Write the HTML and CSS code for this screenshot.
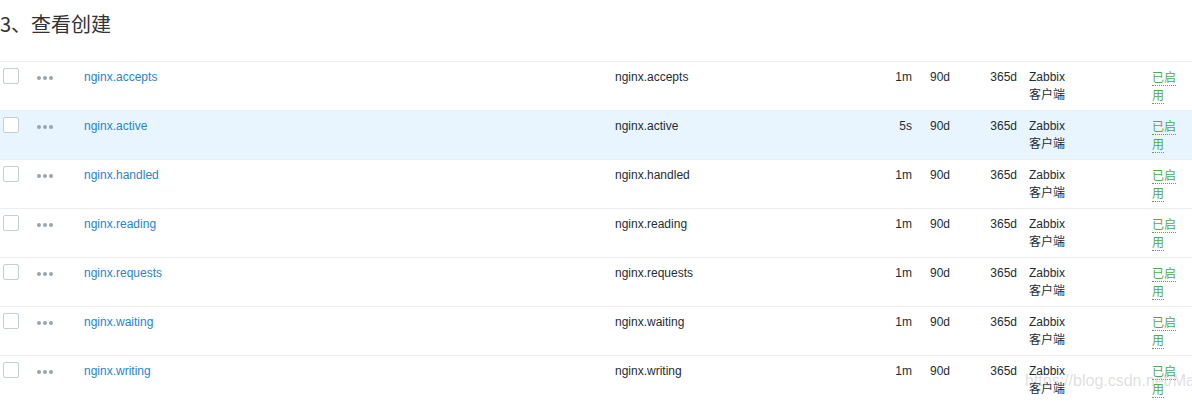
FILE: index.html
```html
<!DOCTYPE html>
<html lang="zh">
<head>
<meta charset="utf-8">
<link rel="stylesheet" href="styles.css">
</head>
<body>
<h3 class="title">3、查看创建</h3>
<div class="table">
  <div class="row">
    <div class="c cb"><span class="box"></span></div>
    <div class="c dots"><i></i><i></i><i></i></div>
    <div class="c name"><a>nginx.accepts</a></div>
    <div class="c key">nginx.accepts</div>
    <div class="c intv">1m</div>
    <div class="c hist">90d</div>
    <div class="c trend">365d</div>
    <div class="c type">Zabbix 客户端</div>
    <div class="c status"><span>已启用</span></div>
  </div>
  <div class="row hl">
    <div class="c cb"><span class="box"></span></div>
    <div class="c dots"><i></i><i></i><i></i></div>
    <div class="c name"><a>nginx.active</a></div>
    <div class="c key">nginx.active</div>
    <div class="c intv">5s</div>
    <div class="c hist">90d</div>
    <div class="c trend">365d</div>
    <div class="c type">Zabbix 客户端</div>
    <div class="c status"><span>已启用</span></div>
  </div>
  <div class="row">
    <div class="c cb"><span class="box"></span></div>
    <div class="c dots"><i></i><i></i><i></i></div>
    <div class="c name"><a>nginx.handled</a></div>
    <div class="c key">nginx.handled</div>
    <div class="c intv">1m</div>
    <div class="c hist">90d</div>
    <div class="c trend">365d</div>
    <div class="c type">Zabbix 客户端</div>
    <div class="c status"><span>已启用</span></div>
  </div>
  <div class="row">
    <div class="c cb"><span class="box"></span></div>
    <div class="c dots"><i></i><i></i><i></i></div>
    <div class="c name"><a>nginx.reading</a></div>
    <div class="c key">nginx.reading</div>
    <div class="c intv">1m</div>
    <div class="c hist">90d</div>
    <div class="c trend">365d</div>
    <div class="c type">Zabbix 客户端</div>
    <div class="c status"><span>已启用</span></div>
  </div>
  <div class="row">
    <div class="c cb"><span class="box"></span></div>
    <div class="c dots"><i></i><i></i><i></i></div>
    <div class="c name"><a>nginx.requests</a></div>
    <div class="c key">nginx.requests</div>
    <div class="c intv">1m</div>
    <div class="c hist">90d</div>
    <div class="c trend">365d</div>
    <div class="c type">Zabbix 客户端</div>
    <div class="c status"><span>已启用</span></div>
  </div>
  <div class="row">
    <div class="c cb"><span class="box"></span></div>
    <div class="c dots"><i></i><i></i><i></i></div>
    <div class="c name"><a>nginx.waiting</a></div>
    <div class="c key">nginx.waiting</div>
    <div class="c intv">1m</div>
    <div class="c hist">90d</div>
    <div class="c trend">365d</div>
    <div class="c type">Zabbix 客户端</div>
    <div class="c status"><span>已启用</span></div>
  </div>
  <div class="row">
    <div class="c cb"><span class="box"></span></div>
    <div class="c dots"><i></i><i></i><i></i></div>
    <div class="c name"><a>nginx.writing</a></div>
    <div class="c key">nginx.writing</div>
    <div class="c intv">1m</div>
    <div class="c hist">90d</div>
    <div class="c trend">365d</div>
    <div class="c type">Zabbix 客户端</div>
    <div class="c status"><span>已启用</span></div>
  </div>
</div>
<div class="watermark">https://blog.csdn.net/Magic</div>
</body>
</html>
```
FILE: styles.css
```css
html, body {
  margin: 0;
  padding: 0;
  background: #ffffff;
}
body {
  position: relative;
  width: 1192px;
  height: 408px;
  overflow: hidden;
  font-family: "Liberation Sans", Arial, "Noto Sans CJK SC", sans-serif;
  color: #1f2c33;
}
.title {
  margin: 0;
  padding: 10px 0 0 0;
  height: 61px;
  box-sizing: border-box;
  font-family: "Noto Sans CJK SC", "Liberation Sans", sans-serif;
  font-weight: 400;
  font-size: 20px;
  line-height: 28px;
  color: #333333;
}
.table {
  display: flex;
  flex-direction: column;
}
.row {
  display: grid;
  grid-template-columns: 31px 47px 531px 265px 44px 54px 51px 123px 46px;
  height: 49px;
  box-sizing: border-box;
  border-top: 1px solid #ebeef0;
  font-size: 12px;
  line-height: 18px;
}
.row.hl {
  background: #e8f5ff;
}
.c {
  padding-top: 6px;
  box-sizing: border-box;
  white-space: normal;
}
.cb {
  padding: 6px 0 0 3px;
}
.box {
  display: block;
  width: 16px;
  height: 16px;
  box-sizing: border-box;
  border: 1px solid #c5ced3;
  border-radius: 2px;
  background: #ffffff;
}
.dots {
  display: flex;
  gap: 2px;
  padding: 14px 0 0 6px;
  align-items: flex-start;
}
.dots i {
  display: block;
  width: 4px;
  height: 4px;
  border-radius: 50%;
  background: #9aa5ac;
}
.name {
  padding-left: 6px;
}
.name a {
  color: #2a84c8;
  text-decoration: none;
}
.key {
  padding-left: 6px;
}
.intv {
  text-align: right;
  padding-right: 6px;
}
.hist {
  padding-left: 12px;
}
.trend {
  text-align: right;
  padding-right: 6px;
}
.type {
  padding-left: 6px;
  padding-right: 75px;
  font-family: "Liberation Sans", "Noto Sans CJK SC", sans-serif;
}
.status {
  padding-left: 6px;
  padding-right: 14px;
  font-family: "Noto Sans CJK SC", sans-serif;
}
.status span {
  color: #52a94f;
  border-bottom: 1px dotted #52a94f;
  line-height: 18px;
}
.watermark {
  position: absolute;
  left: 1025px;
  top: 372px;
  font-family: "Liberation Sans", sans-serif;
  font-size: 16px;
  color: rgba(160, 160, 160, 0.35);
  white-space: nowrap;
}
```
